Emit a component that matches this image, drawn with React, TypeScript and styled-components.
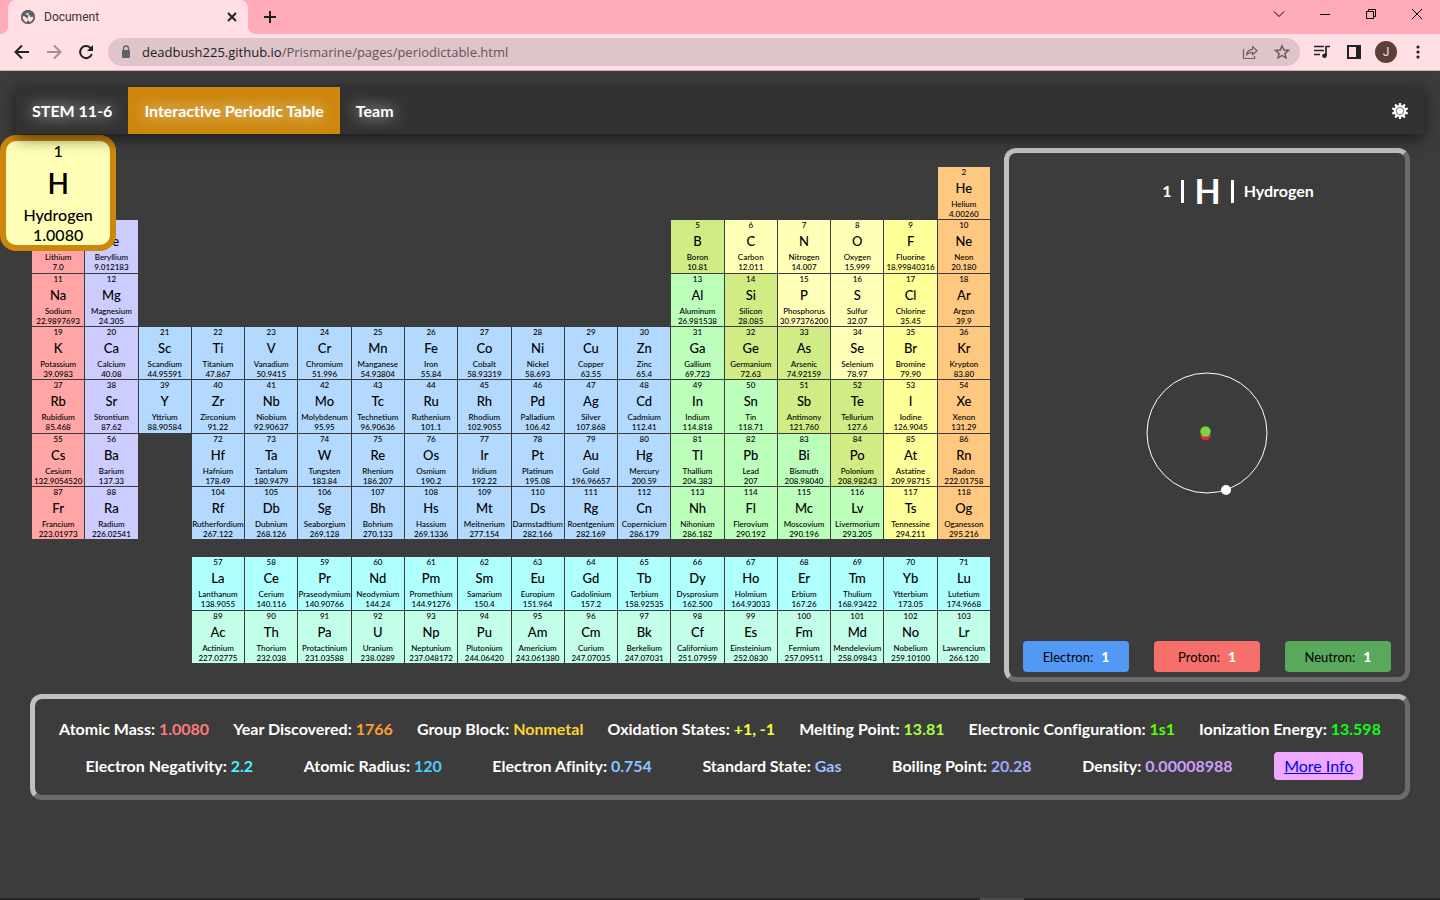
import React from 'react';
import styled, { createGlobalStyle } from 'styled-components';

const GlobalStyle = createGlobalStyle`
  *, *::before, *::after { box-sizing: border-box; }
  html, body { margin: 0; padding: 0; }
  body {
    background: #3c3c3c;
    color: #fff;
    font-family: Lato, 'Liberation Sans', sans-serif;
    font-size: 16px;
    font-variant-ligatures: none;
  }
  button, input { font-family: inherit; }
`;

/* ---------- browser frame ---------- */

const Window = styled.div`
  display: flex;
  flex-direction: column;
  min-height: 100vh;
`;

const TabStrip = styled.div`
  display: flex;
  align-items: flex-start;
  height: 34px;
  padding-left: 8px;
  background: #ffabba;
`;

const BrowserTab = styled.div`
  position: relative;
  display: flex;
  align-items: center;
  gap: 8px;
  width: 240px;
  height: 34px;
  padding: 0 9px 0 12px;
  border-radius: 8px 8px 0 0;
  background: #ffdee4;
  color: #3c3035;
  font: 12px/16px Roboto, sans-serif;

  &::before, &::after {
    content: '';
    position: absolute;
    bottom: 0;
    width: 8px;
    height: 8px;
  }
  &::before {
    left: -8px;
    background: radial-gradient(circle at 0 0, transparent 8px, #ffdee4 8px);
  }
  &::after {
    right: -8px;
    background: radial-gradient(circle at 100% 0, transparent 8px, #ffdee4 8px);
  }
`;

const TabTitle = styled.span`
  flex: 1;
`;

const IconButton = styled.button<{ $w?: number; $h?: number }>`
  display: flex;
  align-items: center;
  justify-content: center;
  flex: none;
  width: ${p => p.$w ?? 32}px;
  height: ${p => p.$h ?? 32}px;
  padding: 0;
  border: 0;
  background: none;
  color: #202124;
`;

const WindowControls = styled.div`
  display: flex;
  margin-left: auto;
`;

const Toolbar = styled.div`
  display: flex;
  align-items: center;
  height: 37px;
  padding: 0 6px;
  border-bottom: 1px solid #c9b3b8;
  background: #ffdee4;
`;

const AddressBar = styled.div`
  position: relative;
  display: flex;
  align-items: center;
  flex: 1;
  height: 28px;
  margin: 0 6px;
  padding: 0 2px 0 12px;
  border-radius: 14px;
  background: #dfc4c9;
  font: 13px/20px 'Open Sans', 'Noto Sans', sans-serif;
  color: #5f5459;
`;

const Url = styled.span`
  flex: 1;
  margin-left: 10px;
  white-space: nowrap;
`;

const Host = styled.span`
  color: #202124;
`;

const Avatar = styled.span`
  display: flex;
  align-items: center;
  justify-content: center;
  width: 22px;
  height: 22px;
  border-radius: 50%;
  background: #5b4037;
  color: #f0e8e6;
  font: 12px/22px Roboto, sans-serif;
`;

/* ---------- site navigation ---------- */

const NavBar = styled.nav`
  position: relative;
  z-index: 2;
  display: flex;
  align-items: center;
  height: 47px;
  margin: 16px 16px 0;
  padding-right: 16px;
  background: #323232;
  box-shadow: 0 4px 16px rgba(0, 0, 0, 0.6);
`;

const NavLink = styled.a<{ $active?: boolean }>`
  display: flex;
  align-items: center;
  height: 100%;
  padding: 0 16px;
  background: ${p => (p.$active ? '#cd870c' : 'transparent')};
  color: #fff;
  font-weight: 700;
  line-height: 20px;
  text-decoration: none;
  text-shadow: 0 0 16px #fff;
`;

const SettingsButton = styled(IconButton)`
  margin-left: auto;
  color: #fff;
`;

/* ---------- periodic table ---------- */

const Main = styled.main`
  flex: 1;
  padding: 14px 30px;
`;

const Upper = styled.div`
  display: grid;
  grid-template-columns: minmax(0, 1fr) 406px;
  gap: 14px;
  padding-left: 2px;
`;

const ElementGrid = styled.div`
  display: grid;
  grid-template-columns: repeat(18, minmax(0, 1fr));
  grid-template-rows: repeat(7, auto) 16px repeat(2, auto);
  gap: 1px;
  padding: 19px 0;
`;

const Cell = styled.button<{ $col: number; $row: number; $color: string }>`
  position: relative;
  grid-column: ${p => p.$col};
  grid-row: ${p => p.$row};
  display: flex;
  flex-direction: column;
  align-items: center;
  justify-content: flex-start;
  min-width: 0;
  min-height: 0;
  aspect-ratio: 1;
  padding: 0;
  border: 0;
  background: ${p => p.$color};
  color: #000;
  font-size: 8px;
  line-height: 10px;
  white-space: nowrap;
`;

const CellSymbol = styled.span`
  font-size: 13px;
  font-weight: 500;
  line-height: 22px;
`;

const CellText = styled.span`
  font-weight: 500;
`;

const Zoomed = styled.span`
  position: absolute;
  inset: -32px;
  z-index: 1;
  display: flex;
  flex-direction: column;
  align-items: center;
  border: 6px solid #cd870c;
  border-radius: 16px;
  background: #ffffb8;
  font-size: 16px;
  line-height: 20px;
`;

const ZoomedSymbol = styled(CellSymbol)`
  font-size: 28px;
  font-weight: 600;
  line-height: 44px;
`;

/* ---------- panels ---------- */

const Panel = styled.section`
  border: 5px solid;
  border-color: #c0c0c0 #6b6b6b #6b6b6b #c0c0c0;
  border-radius: 12px;
`;

const AtomPanel = styled(Panel)`
  display: flex;
  flex-direction: column;
  padding: 18px 14px 5px;
`;

const AtomTitle = styled.h1`
  display: flex;
  align-items: center;
  justify-content: center;
  gap: 10px;
  margin: 0;
  padding-left: 62px;
  font-size: 16px;
  line-height: 40px;
  font-weight: 700;
`;

const AtomSymbol = styled.span`
  font-size: 34px;
`;

const Bar = styled.span`
  width: 3px;
  height: 23px;
  background: #fff;
`;

const AtomModel = styled.svg`
  flex: 1;
  width: 100%;
  min-height: 0;
`;

const Counts = styled.div`
  display: flex;
  justify-content: space-between;
`;

const Count = styled.div<{ $color: string }>`
  display: flex;
  align-items: center;
  justify-content: center;
  gap: 8px;
  width: 106px;
  height: 31px;
  border-radius: 4px;
  background: ${p => p.$color};
  color: #000;
  font-size: 13px;
  line-height: 20px;
`;

const CountValue = styled.strong`
  color: #fff;
  font-size: 14px;
  font-weight: 900;
`;

const InfoPanel = styled(Panel)`
  display: flex;
  flex-direction: column;
  gap: 9px;
  margin-top: 12px;
  padding: 16px 0 15px;
`;

const InfoRow = styled.div`
  display: flex;
  align-items: center;
  justify-content: space-evenly;
  height: 28px;
  font-weight: 700;
  line-height: 20px;
  white-space: nowrap;
`;

const InfoValue = styled.span<{ $color: string }>`
  color: ${p => p.$color};
`;

/* The padding hangs outside the link's share of the row. */
const MoreInfo = styled.a`
  margin: 0 -9px;
  padding: 4px 10px;
  border-radius: 4px;
  background: #eea8ff;
  color: #0000ee;
  font-weight: 400;
  line-height: 20px;
`;

const BottomStrip = styled.footer`
  display: flex;
  height: 2px;
  padding-left: 980px;
  background: #252525;
`;

const BottomMark = styled.span`
  width: 44px;
  background: #4c4c4c;
`;

/* ---------- data ---------- */

const COLORS: Record<string, string> = {
  a: '#ffa5a5',
  e: '#ccccff',
  t: '#b3d9ff',
  m: '#d1eb85',
  p: '#bbffbb',
  n: '#ffffb8',
  h: '#ffff99',
  g: '#ffc880',
  l: '#b0ffff',
  c: '#c2ffe8',
};

/* One entry per run of neighbours: row | first column | first number | elements as symbol,name,mass,group */
const RUNS: [number, number, number, string][] = [
  [1, 1, 1, 'H,Hydrogen,1.0080,n'],
  [1, 18, 2, 'He,Helium,4.00260,g'],
  [2, 1, 3, 'Li,Lithium,7.0,a;Be,Beryllium,9.012183,e'],
  [2, 13, 5, 'B,Boron,10.81,m;C,Carbon,12.011,n;N,Nitrogen,14.007,n;O,Oxygen,15.999,n;F,Fluorine,18.99840316,h;Ne,Neon,20.180,g'],
  [3, 1, 11, 'Na,Sodium,22.9897693,a;Mg,Magnesium,24.305,e'],
  [3, 13, 13, 'Al,Aluminum,26.981538,p;Si,Silicon,28.085,m;P,Phosphorus,30.97376200,n;S,Sulfur,32.07,n;Cl,Chlorine,35.45,h;Ar,Argon,39.9,g'],
  [4, 1, 19, 'K,Potassium,39.0983,a;Ca,Calcium,40.08,e;Sc,Scandium,44.95591,t;Ti,Titanium,47.867,t;V,Vanadium,50.9415,t;Cr,Chromium,51.996,t;Mn,Manganese,54.93804,t;Fe,Iron,55.84,t;Co,Cobalt,58.93319,t;Ni,Nickel,58.693,t;Cu,Copper,63.55,t;Zn,Zinc,65.4,t;Ga,Gallium,69.723,p;Ge,Germanium,72.63,m;As,Arsenic,74.92159,m;Se,Selenium,78.97,n;Br,Bromine,79.90,h;Kr,Krypton,83.80,g'],
  [5, 1, 37, 'Rb,Rubidium,85.468,a;Sr,Strontium,87.62,e;Y,Yttrium,88.90584,t;Zr,Zirconium,91.22,t;Nb,Niobium,92.90637,t;Mo,Molybdenum,95.95,t;Tc,Technetium,96.90636,t;Ru,Ruthenium,101.1,t;Rh,Rhodium,102.9055,t;Pd,Palladium,106.42,t;Ag,Silver,107.868,t;Cd,Cadmium,112.41,t;In,Indium,114.818,p;Sn,Tin,118.71,p;Sb,Antimony,121.760,m;Te,Tellurium,127.6,m;I,Iodine,126.9045,h;Xe,Xenon,131.29,g'],
  [6, 1, 55, 'Cs,Cesium,132.9054520,a;Ba,Barium,137.33,e'],
  [6, 4, 72, 'Hf,Hafnium,178.49,t;Ta,Tantalum,180.9479,t;W,Tungsten,183.84,t;Re,Rhenium,186.207,t;Os,Osmium,190.2,t;Ir,Iridium,192.22,t;Pt,Platinum,195.08,t;Au,Gold,196.96657,t;Hg,Mercury,200.59,t;Tl,Thallium,204.383,p;Pb,Lead,207,p;Bi,Bismuth,208.98040,p;Po,Polonium,208.98243,m;At,Astatine,209.98715,h;Rn,Radon,222.01758,g'],
  [7, 1, 87, 'Fr,Francium,223.01973,a;Ra,Radium,226.02541,e'],
  [7, 4, 104, 'Rf,Rutherfordium,267.122,t;Db,Dubnium,268.126,t;Sg,Seaborgium,269.128,t;Bh,Bohrium,270.133,t;Hs,Hassium,269.1336,t;Mt,Meitnerium,277.154,t;Ds,Darmstadtium,282.166,t;Rg,Roentgenium,282.169,t;Cn,Copernicium,286.179,t;Nh,Nihonium,286.182,p;Fl,Flerovium,290.192,p;Mc,Moscovium,290.196,p;Lv,Livermorium,293.205,p;Ts,Tennessine,294.211,h;Og,Oganesson,295.216,g'],
  [9, 4, 57, 'La,Lanthanum,138.9055,l;Ce,Cerium,140.116,l;Pr,Praseodymium,140.90766,l;Nd,Neodymium,144.24,l;Pm,Promethium,144.91276,l;Sm,Samarium,150.4,l;Eu,Europium,151.964,l;Gd,Gadolinium,157.2,l;Tb,Terbium,158.92535,l;Dy,Dysprosium,162.500,l;Ho,Holmium,164.93033,l;Er,Erbium,167.26,l;Tm,Thulium,168.93422,l;Yb,Ytterbium,173.05,l;Lu,Lutetium,174.9668,l'],
  [10, 4, 89, 'Ac,Actinium,227.02775,c;Th,Thorium,232.038,c;Pa,Protactinium,231.03588,c;U,Uranium,238.0289,c;Np,Neptunium,237.048172,c;Pu,Plutonium,244.06420,c;Am,Americium,243.061380,c;Cm,Curium,247.07035,c;Bk,Berkelium,247.07031,c;Cf,Californium,251.07959,c;Es,Einsteinium,252.0830,c;Fm,Fermium,257.09511,c;Md,Mendelevium,258.09843,c;No,Nobelium,259.10100,c;Lr,Lawrencium,266.120,c'],
];

const ELEMENTS = RUNS.flatMap(([row, col, first, list]) =>
  list.split(';').map((item, i) => {
    const [symbol, name, mass, group] = item.split(',');
    return { number: first + i, symbol, name, mass, color: COLORS[group], row, col: col + i };
  }),
);

const INFO: [string, string, string][][] = [
  [
    ['Atomic Mass', '1.0080', '#ff7b7b'],
    ['Year Discovered', '1766', '#ff9d2e'],
    ['Group Block', 'Nonmetal', '#ffd32e'],
    ['Oxidation States', '+1, -1', '#f4ff3d'],
    ['Melting Point', '13.81', '#a8ff3d'],
    ['Electronic Configuration', '1s1', '#55ff00'],
    ['Ionization Energy', '13.598', '#0dff0d'],
  ],
  [
    ['Electron Negativity', '2.2', '#4deeff'],
    ['Atomic Radius', '120', '#4dcfff'],
    ['Electron Afinity', '0.754', '#8cc4ff'],
    ['Standard State', 'Gas', '#9ebfff'],
    ['Boiling Point', '20.28', '#a3a8ff'],
    ['Density', '0.00008988', '#cf9dff'],
  ],
];

/* ---------- icons ---------- */

const Globe = () => (
  <svg width="16" height="16" viewBox="0 0 16 16" aria-hidden="true">
    <circle cx="8" cy="8" r="7" fill="#5f6368" />
    <path d="M9 1.500L8.500 4 6.500 4.300 6 6h3.500l1 2h2.200l1.600-1.500A6.500 6.500 0 0 1 9 14l.4-2-1.700-.8-.2-1.800L4.500 7.300 2 7.200A6.500 6.500 0 0 0 7 14l.3-1.500" fill="#ffdee4" />
    <circle cx="8" cy="8" r="6.200" fill="none" stroke="#5f6368" strokeWidth="1.700" />
  </svg>
);

const Stroke = ({ d, size = 16, width = 2, color = 'currentColor' }: { d: string; size?: number; width?: number; color?: string }) => (
  <svg width={size} height={size} viewBox={`0 0 ${size} ${size}`} fill="none" stroke={color} strokeWidth={width} aria-hidden="true">
    <path d={d} />
  </svg>
);

const Reload = () => (
  <svg width="16" height="16" viewBox="0 0 16 16" aria-hidden="true">
    <path d="M13.800 10A6 6 0 1 1 12.300 3.800L14 5.500" fill="none" stroke="currentColor" strokeWidth="2" />
    <path d="M15 1v6H9z" fill="currentColor" />
  </svg>
);

const Lock = () => (
  <svg width="12" height="14" viewBox="0 0 12 14" aria-hidden="true">
    <rect x="2" y="5" width="8" height="8" rx="1" fill="#5f6368" />
    <path d="M3.500 5.500V3.500a2.500 2.500 0 0 1 5 0v2" fill="none" stroke="#5f6368" strokeWidth="1.300" />
  </svg>
);

const Share = () => (
  <svg width="16" height="16" viewBox="0 0 16 16" fill="none" stroke="#6c6165" strokeWidth="1.200" aria-hidden="true">
    <path d="M1.500 5v9.500h11V12" />
    <path d="M4.500 11C5 7.500 7 5.500 10.500 5.300V2.500L15 6.700l-4.500 4V8.300C8 8.300 6 9 4.500 11z" strokeLinejoin="round" />
  </svg>
);

const Star = () => (
  <svg width="16" height="16" viewBox="0 0 16 16" fill="none" stroke="#5f5a5e" strokeWidth="1.400" aria-hidden="true">
    <path d="M8 1.800l1.800 4.200 4.600.4-3.500 3 1.100 4.500-4-2.400-4 2.400 1.100-4.500-3.500-3 4.600-.4z" />
  </svg>
);

const Playlist = () => (
  <svg width="18" height="16" viewBox="0 0 18 16" fill="none" stroke="currentColor" strokeWidth="1.700" aria-hidden="true">
    <path d="M1 2.500h10M1 6.500h10M1 10.500h6M13 12V2.500h4" />
    <circle cx="11.500" cy="11.800" r="2.300" fill="currentColor" stroke="none" />
  </svg>
);

const SidePanel = () => (
  <svg width="14" height="14" viewBox="0 0 14 14" aria-hidden="true">
    <path d="M1 1h12v12H1z" fill="none" stroke="currentColor" strokeWidth="2" />
    <path d="M9 1h4v12H9z" fill="currentColor" />
  </svg>
);

const Dots = () => (
  <svg width="4" height="14" viewBox="0 0 4 14" fill="currentColor" aria-hidden="true">
    <circle cx="2" cy="2" r="1.600" />
    <circle cx="2" cy="7" r="1.600" />
    <circle cx="2" cy="12" r="1.600" />
  </svg>
);

const Restore = () => (
  <svg width="12" height="12" viewBox="0 0 12 12" fill="none" stroke="#000" aria-hidden="true">
    <path d="M1.500 3.500h7v7h-7zM3.500 3.500v-2h7v7h-2" />
  </svg>
);

/* Ten-toothed outline, alternating between the outer and inner radius. */
const GEAR = Array.from({ length: 20 }, (_, i) => {
  const r = i % 2 ? 6.2 : 8.2;
  return [-0.13, 0.13]
    .map(o => {
      const t = (i * Math.PI) / 10 + o - Math.PI / 2;
      return `${(8 + r * Math.cos(t)).toFixed(2)},${(8 + r * Math.sin(t)).toFixed(2)}`;
    })
    .join(' ');
}).join(' ');

const Gear = () => (
  <svg width="16" height="16" viewBox="0 0 16 16" aria-hidden="true">
    <polygon points={GEAR} fill="#fff" />
    <circle cx="8" cy="8" r="3.700" fill="none" stroke="#666" strokeWidth="0.900" />
  </svg>
);

/* ---------- page ---------- */

export default function App() {
  return (
    <Window>
      <GlobalStyle />
      <TabStrip>
        <BrowserTab>
          <Globe />
          <TabTitle>Document</TabTitle>
          <IconButton $w={14} $h={14} aria-label="Close tab">
            <Stroke size={10} d="M1 1l8 8M9 1l-8 8" width={2} />
          </IconButton>
        </BrowserTab>
        <IconButton $w={44} $h={34} aria-label="New tab">
          <Stroke size={12} d="M6 0v12M0 6h12" />
        </IconButton>
        <WindowControls>
          <IconButton $w={46} $h={28} aria-label="Search tabs">
            <Stroke size={12} d="M1 3.500l5 5 5-5" width={1} color="#000" />
          </IconButton>
          <IconButton $w={46} $h={28} aria-label="Minimize">
            <Stroke size={10} d="M0 5.500h10" width={1} color="#000" />
          </IconButton>
          <IconButton $w={46} $h={28} aria-label="Restore">
            <Restore />
          </IconButton>
          <IconButton $w={46} $h={28} aria-label="Close">
            <Stroke size={12} d="M1 1l10 10M11 1l-10 10" width={1} color="#000" />
          </IconButton>
        </WindowControls>
      </TabStrip>
      <Toolbar>
        <IconButton aria-label="Back">
          <Stroke d="M15 8H2M8 1.500L1.500 8 8 14.500" />
        </IconButton>
        <IconButton aria-label="Forward">
          <Stroke d="M1 8h13M8 1.500L14.500 8 8 14.500" color="#a58f95" />
        </IconButton>
        <IconButton aria-label="Reload">
          <Reload />
        </IconButton>
        <AddressBar>
          <Lock />
          <Url>
            <Host>deadbush225.github.io</Host>/Prismarine/pages/periodictable.html
          </Url>
          <IconButton $h={28} aria-label="Share">
            <Share />
          </IconButton>
          <IconButton $h={28} aria-label="Bookmark">
            <Star />
          </IconButton>
        </AddressBar>
        <IconButton aria-label="Media">
          <Playlist />
        </IconButton>
        <IconButton aria-label="Side panel">
          <SidePanel />
        </IconButton>
        <IconButton aria-label="Profile">
          <Avatar>J</Avatar>
        </IconButton>
        <IconButton aria-label="Menu">
          <Dots />
        </IconButton>
      </Toolbar>

      <NavBar>
        <NavLink href="#home">STEM 11-6</NavLink>
        <NavLink href="#table" $active>Interactive Periodic Table</NavLink>
        <NavLink href="#team">Team</NavLink>
        <SettingsButton $w={16} aria-label="Settings">
          <Gear />
        </SettingsButton>
      </NavBar>

      <Main>
        <Upper>
          <ElementGrid>
            {ELEMENTS.map(el => (
              <Cell key={el.number} $col={el.col} $row={el.row} $color={el.color}>
                {el.number === 1 ? (
                  <Zoomed>
                    <CellText>{el.number}</CellText>
                    <ZoomedSymbol>{el.symbol}</ZoomedSymbol>
                    <CellText>{el.name}</CellText>
                    <CellText>{el.mass}</CellText>
                  </Zoomed>
                ) : (
                  <>
                    <CellText>{el.number}</CellText>
                    <CellSymbol>{el.symbol}</CellSymbol>
                    <CellText>{el.name}</CellText>
                    <CellText>{el.mass}</CellText>
                  </>
                )}
              </Cell>
            ))}
          </ElementGrid>

          <AtomPanel>
            <AtomTitle>
              <span>1</span>
              <Bar />
              <AtomSymbol>H</AtomSymbol>
              <Bar />
              <span>Hydrogen</span>
            </AtomTitle>
            <AtomModel viewBox="0 0 368 430" role="img" aria-label="Hydrogen atom">
              <circle cx="184" cy="222" r="60" fill="none" stroke="#fff" />
              <circle cx="182.500" cy="224.500" r="5" fill="#dc2a44" />
              <circle cx="182.500" cy="220.500" r="5.200" fill="#7bd63c" />
              <circle cx="203" cy="279" r="5" fill="#fff" />
            </AtomModel>
            <Counts>
              <Count $color="#5199f5">Electron: <CountValue>1</CountValue></Count>
              <Count $color="#f66f6a">Proton: <CountValue>1</CountValue></Count>
              <Count $color="#58a95b">Neutron: <CountValue>1</CountValue></Count>
            </Counts>
          </AtomPanel>
        </Upper>

        <InfoPanel>
          {INFO.map((row, i) => (
            <InfoRow key={i}>
              {row.map(([label, value, color]) => (
                <span key={label}>
                  {label}: <InfoValue $color={color}>{value}</InfoValue>
                </span>
              ))}
              {i === 1 && <MoreInfo href="#more">More Info</MoreInfo>}
            </InfoRow>
          ))}
        </InfoPanel>
      </Main>

      <BottomStrip>
        <BottomMark />
      </BottomStrip>
    </Window>
  );
}
